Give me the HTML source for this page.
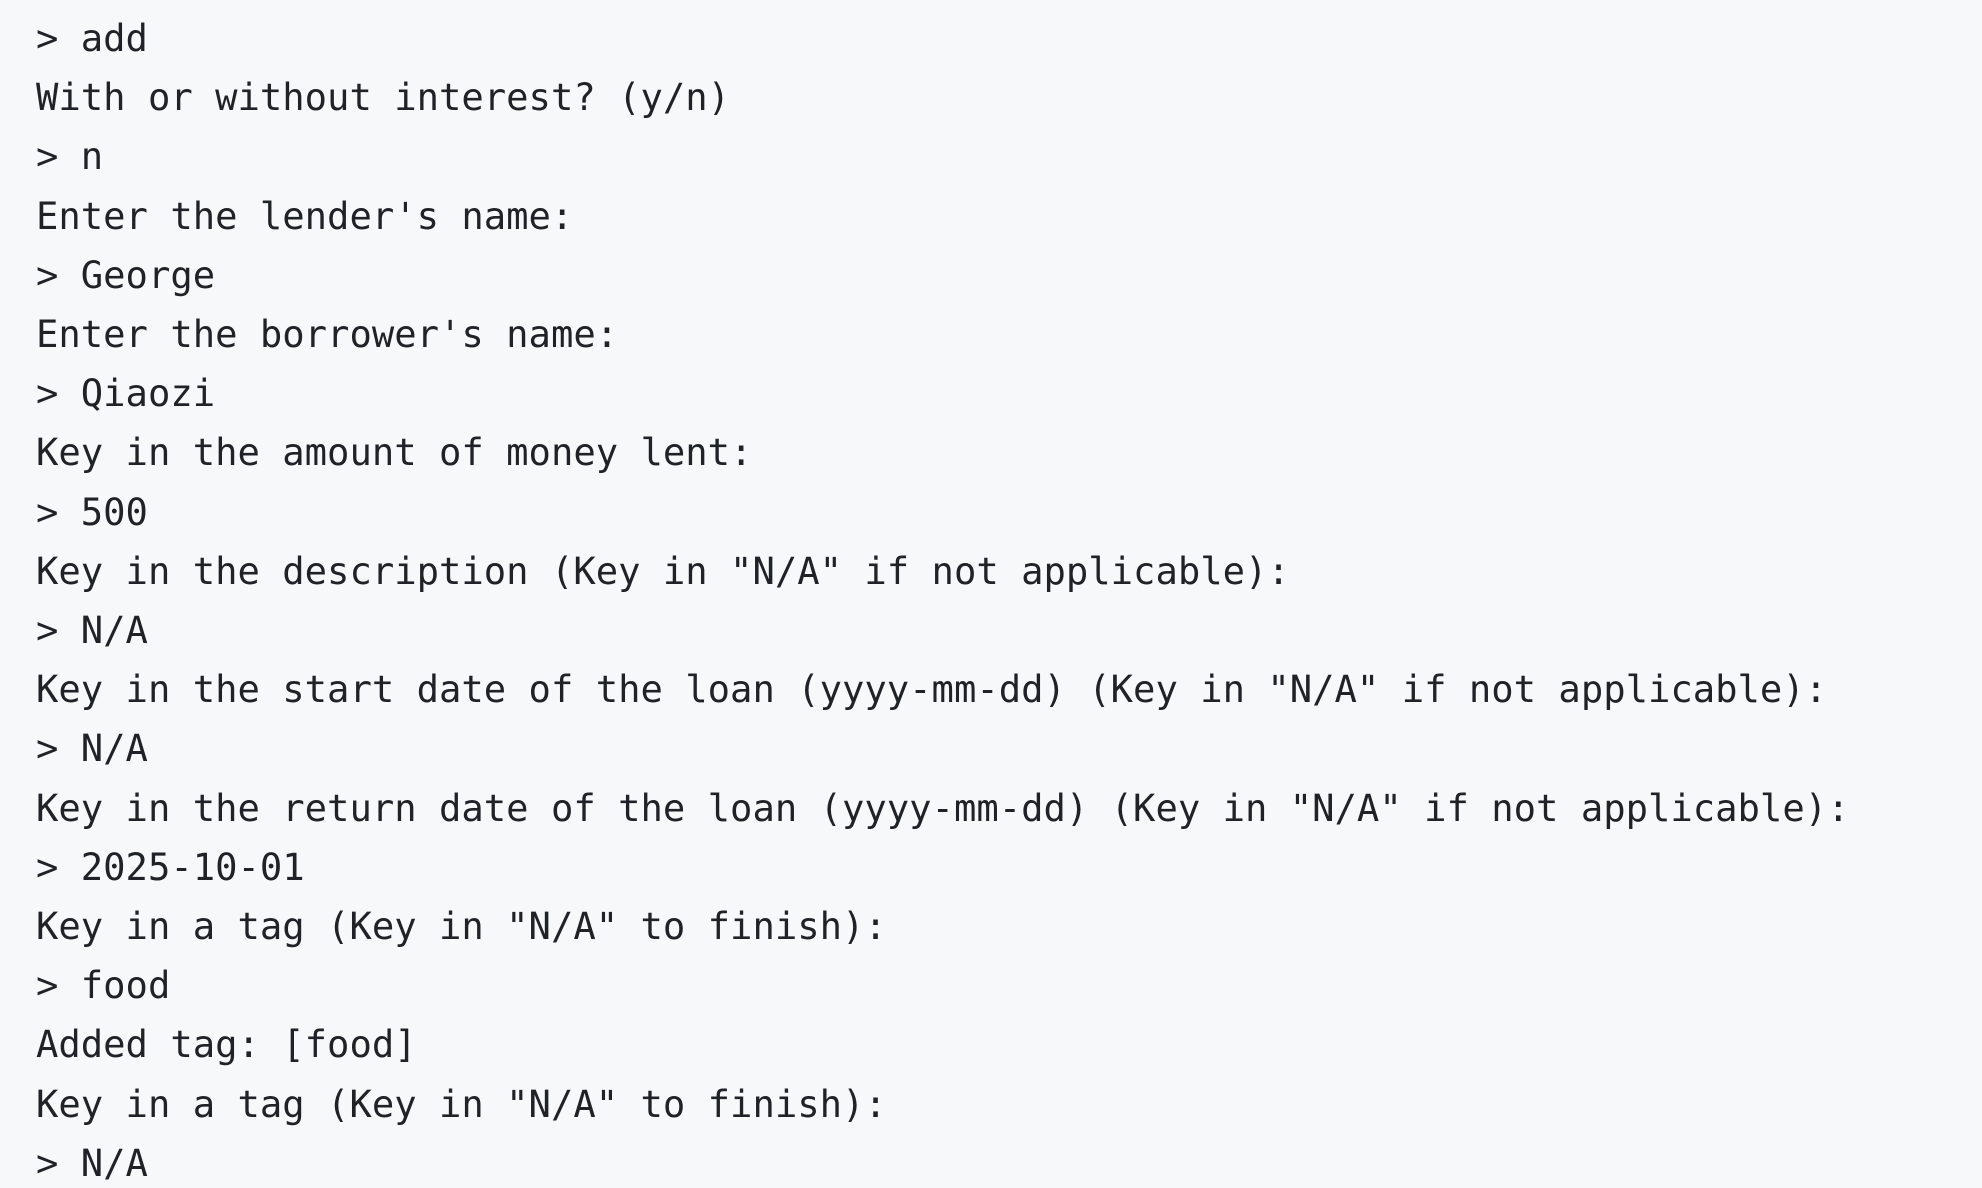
<!DOCTYPE html>
<html><head><meta charset="utf-8"><style>
html,body{margin:0;padding:0;background:#f6f8fa;width:1982px;height:1188px;overflow:hidden}
pre{margin:0;padding:9px 0 0 36px;font-family:"DejaVu Sans Mono","Liberation Mono",monospace;font-size:37.2px;line-height:59.2px;color:#1f2328}
</style></head><body><pre>&gt; add
With or without interest? (y/n)
&gt; n
Enter the lender's name:
&gt; George
Enter the borrower's name:
&gt; Qiaozi
Key in the amount of money lent:
&gt; 500
Key in the description (Key in "N/A" if not applicable):
&gt; N/A
Key in the start date of the loan (yyyy-mm-dd) (Key in "N/A" if not applicable):
&gt; N/A
Key in the return date of the loan (yyyy-mm-dd) (Key in "N/A" if not applicable):
&gt; 2025-10-01
Key in a tag (Key in "N/A" to finish):
&gt; food
Added tag: [food]
Key in a tag (Key in "N/A" to finish):
&gt; N/A</pre></body></html>
